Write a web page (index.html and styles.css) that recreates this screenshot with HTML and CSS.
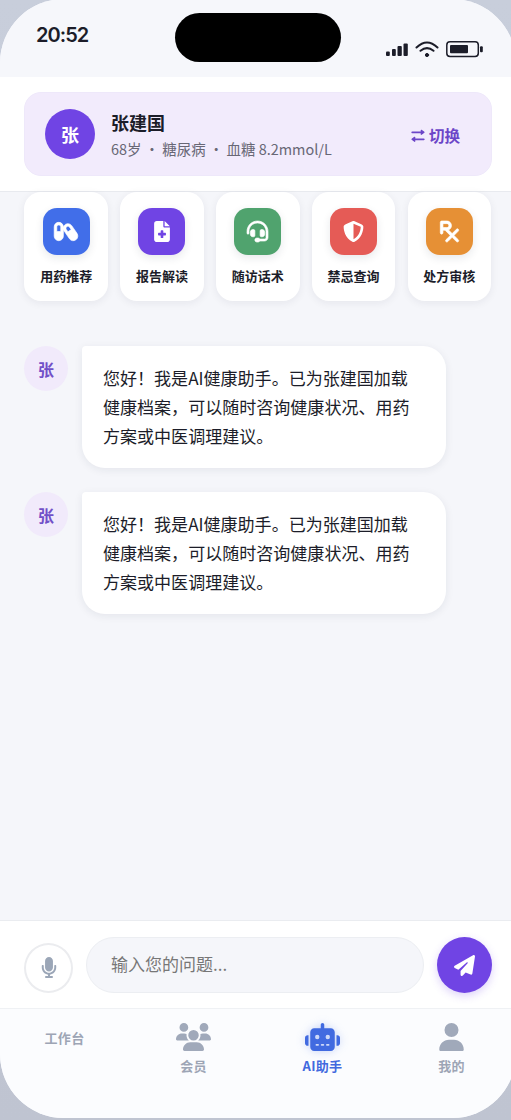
FILE: index.html
```html
<!DOCTYPE html>
<html lang="zh-CN">
<head>
<meta charset="utf-8">
<title>AI助手</title>
<link rel="stylesheet" href="styles.css">
</head>
<body>
<div class="phone">
  <header class="status">
    <span class="time">20:52</span>
    <span class="island"></span>
    <span class="status-icons">
      <svg width="22" height="15" viewBox="0 0 22 15" fill="#1c1d29"><rect x="0" y="9.500" width="3.800" height="4.500" rx="1"/><rect x="6" y="7" width="3.800" height="7" rx="1"/><rect x="11.500" y="4" width="4.300" height="10" rx="1"/><rect x="17.500" y="1.500" width="4.300" height="12.500" rx="1"/></svg>
      <svg width="24" height="17" viewBox="0 0 24 17" fill="none" stroke="#1c1d29" stroke-width="2" stroke-linecap="round"><path d="M1.500 6.500Q12-3.500 22.500 6.500M5.500 9.800Q12 4.500 18.500 9.800"/><circle cx="12" cy="14" r="1.600" fill="#1c1d29" stroke-width="1"/></svg>
      <svg width="38" height="17" viewBox="0 0 38 17" fill="#1c1d29"><rect x=".8" y=".8" width="31.500" height="14.600" rx="3.200" fill="none" stroke="#1c1d29" stroke-width="1.500"/><rect x="4" y="4" width="18" height="8.300" rx="1"/><rect x="34" y="5.200" width="2.800" height="6" rx="1"/></svg>
    </span>
  </header>

  <section class="patient-bar">
    <div class="patient">
      <div class="patient-avatar">张</div>
      <div class="patient-info">
        <div class="patient-name">张建国</div>
        <div class="patient-meta">68岁 ・ 糖尿病 ・ 血糖 8.2mmol/L</div>
      </div>
      <div class="switch">
        <svg width="14" height="14" viewBox="0 0 14 14" fill="#6c46c8" stroke="#6c46c8" stroke-width="1.700" stroke-linecap="round" stroke-linejoin="round"><path d="M1.200 4.300h9M12.800 11.300H4"/><path d="M10.300 2.300v4L13 4.300zM3.700 9.300v4L1 11.300z" stroke-width="1.200"/></svg>
        <span>切换</span>
      </div>
    </div>
  </section>

  <main class="content">
    <div class="tools">
      <div class="tool"><div class="tool-icon blue"><svg class="bold" width="24" height="21" viewBox="0 0 576 512"><path d="M64 144c0-26.500 21.500-48 48-48s48 21.500 48 48V256H64V144zM0 144V368c0 61.900 50.100 112 112 112s112-50.100 112-112V189.600c1.800 19.100 8.200 38 19.800 54.800L372.300 431.700c35.500 51.700 105.300 64.300 156 28.100s63-107.500 27.500-159.200L427.300 113.300C391.800 61.500 321.900 49 271.300 85.200c-28 20-44.300 50.800-47.300 83V144c0-61.900-50.100-112-112-112S0 82.100 0 144zm296.600 64.200c-16-23.300-10-55.300 11.900-71c21.200-15.100 50.500-10.300 66 12.200l40 58L335 264z"/></svg></div><span>用药推荐</span></div>
      <div class="tool"><div class="tool-icon purple"><svg width="16" height="21" viewBox="0 0 384 512"><path d="M64 0C28.700 0 0 28.700 0 64V448c0 35.300 28.700 64 64 64H320c35.300 0 64-28.700 64-64V160H256c-17.700 0-32-14.300-32-32V0H64zM256 0V128H384L256 0zM160 240c0-8.800 7.200-16 16-16h32c8.800 0 16 7.200 16 16v48h48c8.800 0 16 7.200 16 16v32c0 8.800-7.200 16-16 16H224v48c0 8.800-7.200 16-16 16H176c-8.800 0-16-7.200-16-16V352H112c-8.800 0-16-7.200-16-16V304c0-8.800 7.200-16 16-16h48V240z"/></svg></div><span>报告解读</span></div>
      <div class="tool"><div class="tool-icon green"><svg class="bold" width="21" height="21" viewBox="0 0 512 512"><path d="M256 48C141.100 48 48 141.100 48 256v40c0 13.300-10.700 24-24 24s-24-10.700-24-24V256C0 114.600 114.600 0 256 0S512 114.600 512 256V400.100c0 48.600-39.400 88-88.100 88L313.600 488c-8.300 14.300-23.800 24-41.600 24H240c-26.500 0-48-21.500-48-48s21.500-48 48-48h32c17.800 0 33.300 9.700 41.600 24l110.400 .1c22.100 0 40-17.900 40-40V256c0-114.900-93.100-208-208-208zM144 208h16c17.700 0 32 14.300 32 32V352c0 17.700-14.300 32-32 32H144c-35.300 0-64-28.700-64-64V272c0-35.300 28.700-64 64-64zm224 0c35.300 0 64 28.700 64 64v48c0 35.300-28.700 64-64 64H352c-17.700 0-32-14.300-32-32V240c0-17.700 14.300-32 32-32h16z"/></svg></div><span>随访话术</span></div>
      <div class="tool"><div class="tool-icon red"><svg width="21" height="21" viewBox="0 0 512 512"><path d="M256 0c4.600 0 9.200 1 13.400 2.900L457.700 82.800c22 9.300 38.400 31 38.300 57.200c-.5 99.200-41.300 280.700-213.600 363.200c-16.700 8-36.100 8-52.800 0C57.300 420.700 16.500 239.200 16 140c-.1-26.200 16.300-47.900 38.300-57.200L242.700 2.900C246.800 1 251.400 0 256 0zm0 66.800V444.800C394 378 431.100 230.100 432 141.400L256 66.800z"/></svg></div><span>禁忌查询</span></div>
      <div class="tool"><div class="tool-icon orange"><svg class="bold" width="19" height="21" viewBox="0 0 448 512"><path d="M32 0C14.300 0 0 14.300 0 32V288c0 17.700 14.300 32 32 32s32-14.300 32-32V224h50.700l128 128L137.400 457.400c-12.500 12.500-12.500 32.800 0 45.300s32.800 12.500 45.300 0L288 397.300 393.400 502.600c12.500 12.500 32.800 12.500 45.300 0s12.500-32.800 0-45.300L333.300 352 438.600 246.600c12.500-12.500 12.500-32.800 0-45.300s-32.800-12.500-45.300 0L288 306.700 199.500 218.200C241.800 202.300 272 160.700 272 112C272 50.100 221.900 0 160 0H32zM160 160H64V64h96c26.500 0 48 21.500 48 48s-21.500 48-48 48z"/></svg></div><span>处方审核</span></div>
    </div>

    <div class="messages">
      <div class="message"><div class="avatar">张</div><div class="bubble">您好！我是AI健康助手。已为张建国加载健康档案，可以随时咨询健康状况、用药方案或中医调理建议。</div></div>
      <div class="message"><div class="avatar">张</div><div class="bubble">您好！我是AI健康助手。已为张建国加载健康档案，可以随时咨询健康状况、用药方案或中医调理建议。</div></div>
    </div>
  </main>

  <section class="composer">
    <button class="mic" aria-label="语音"><svg width="16" height="21" viewBox="0 0 384 512"><path d="M192 0C139 0 96 43 96 96V256c0 53 43 96 96 96s96-43 96-96V96c0-53-43-96-96-96zM64 216c0-13.300-10.700-24-24-24s-24 10.700-24 24v40c0 89.100 66.200 162.700 152 174.400V464H120c-13.300 0-24 10.700-24 24s10.700 24 24 24h144c13.300 0 24-10.700 24-24s-10.700-24-24-24H216V430.400c85.800-11.700 152-85.300 152-174.400V216c0-13.300-10.700-24-24-24s-24 10.700-24 24v40c0 70.700-57.300 128-128 128s-128-57.300-128-128V216z"/></svg></button>
    <input class="question" type="text" placeholder="输入您的问题...">
    <button class="send" aria-label="发送"><svg width="21" height="21" viewBox="0 0 512 512"><path d="M498.100 5.600c10.100 7 15.400 19.100 13.500 31.200l-64 416c-1.500 9.700-7.400 18.200-16 23s-18.900 5.400-28 1.600L284 427.700l-68.500 74.100c-8.900 9.700-22.900 12.900-35.200 8.100S160 493.200 160 480V396.400c0-4 1.500-7.800 4.200-10.700L331.800 202.800c5.800-6.300 5.600-16-.4-22s-15.700-6.400-22-.7L106 360.800 17.700 316.600C7.100 311.300 .3 300.700 0 288.900s5.900-22.800 16.100-28.700l448-256c10.700-6.100 23.900-5.500 34 1.400z"/></svg></button>
  </section>

  <nav class="tabs">
    <div class="tab first"><span>工作台</span></div>
    <div class="tab"><svg width="35" height="28" viewBox="0 0 640 512"><path d="M144 0a80 80 0 1 1 0 160A80 80 0 1 1 144 0zM512 0a80 80 0 1 1 0 160A80 80 0 1 1 512 0zM0 298.700C0 239.800 47.800 192 106.700 192h42.700c15.900 0 31 3.500 44.600 9.700c-1.300 7.200-1.900 14.700-1.900 22.300c0 38.200 16.800 72.500 43.300 96H21.300C9.600 320 0 310.400 0 298.700zM405.300 320c26.600-23.500 42.600-57.800 42.600-96c0-7.600-.7-15-1.900-22.300c13.600-6.300 28.700-9.700 44.600-9.700h42.700C592.200 192 640 239.800 640 298.700c0 11.800-9.600 21.300-21.300 21.300H405.300zM224 224a96 96 0 1 1 192 0 96 96 0 1 1 -192 0zM128 485.300C128 411.700 187.700 352 261.300 352H378.700C452.300 352 512 411.700 512 485.300c0 14.700-11.900 26.700-26.700 26.700H154.700c-14.700 0-26.700-11.900-26.700-26.700z"/></svg><span>会员</span></div>
    <div class="tab active"><svg width="35" height="28" viewBox="0 0 640 512"><path d="M320 0c17.700 0 32 14.300 32 32V96H472c39.800 0 72 32.200 72 72V440c0 39.800-32.200 72-72 72H168c-39.800 0-72-32.200-72-72V168c0-39.800 32.200-72 72-72H288V32c0-17.700 14.300-32 32-32zM208 384c-8.800 0-16 7.200-16 16s7.200 16 16 16h32c8.800 0 16-7.200 16-16s-7.200-16-16-16H208zm96 0c-8.800 0-16 7.200-16 16s7.200 16 16 16h32c8.800 0 16-7.200 16-16s-7.200-16-16-16H304zm96 0c-8.800 0-16 7.200-16 16s7.200 16 16 16h32c8.800 0 16-7.200 16-16s-7.200-16-16-16H400zM264 256a40 40 0 1 0 -80 0 40 40 0 1 0 80 0zm152 40a40 40 0 1 0 0-80 40 40 0 1 0 0 80zM48 224H64V416H48c-26.500 0-48-21.500-48-48V272c0-26.500 21.500-48 48-48zm544 0c26.500 0 48 21.500 48 48v96c0 26.500-21.500 48-48 48H576V224h16z"/></svg><span>AI助手</span></div>
    <div class="tab"><svg width="25" height="28" viewBox="0 0 448 512"><path d="M224 256A128 128 0 1 0 224 0a128 128 0 1 0 0 256zm-45.700 48C79.800 304 0 383.800 0 482.300C0 498.700 13.300 512 29.700 512H418.300c16.400 0 29.700-13.300 29.700-29.700C448 383.800 368.200 304 269.700 304H178.300z"/></svg><span>我的</span></div>
  </nav>
</div>
</body>
</html>
```
FILE: styles.css
```css
* { box-sizing: border-box; }

body {
  margin: 0;
  height: 1120px;
  overflow: hidden;
  display: flow-root;
  background: linear-gradient(180deg, #c8cedb, #bfc4d1);
  font-family: "Noto Sans CJK SC", sans-serif;
  color: #1c1d29;
}

.phone {
  width: 516px;
  height: 1119px;
  margin-top: -1px;
  border-radius: 64px;
  overflow: hidden;
  display: flex;
  flex-direction: column;
  background: #f5f6fa;
}

.status {
  flex: none;
  height: 78px;
  padding: 14px 32px 0 36px;
  display: grid;
  grid-template-columns: 139px 166px 1fr;
  align-items: start;
  background: #f6f7fb;
}
.time {
  margin-top: 10px;
  font: 600 20px/24px Inter, sans-serif;
  letter-spacing: -0.95px;
}
.island { height: 49px; border-radius: 25px; background: #000; }
.status-icons {
  display: flex;
  justify-content: flex-end;
  align-items: center;
  gap: 7px;
  height: 17px;
  margin-top: 28px;
}

.patient-bar {
  flex: none;
  height: 115px;
  padding: 15px 24px;
  background: #fff;
  border-bottom: 1px solid #e8eaef;
}
.patient {
  height: 84px;
  padding: 0 31px 0 20px;
  display: flex;
  align-items: center;
  border: 1px solid #eee8fa;
  border-radius: 17px;
  background: #f2ebfc;
}
.patient-avatar {
  width: 50px;
  height: 50px;
  border-radius: 50%;
  background: #7044e4;
  color: #fff;
  font-size: 18px;
  font-weight: 700;
  line-height: 51px;
  text-align: center;
}
.patient-info { flex: 1; margin-left: 16px; padding-top: 2px; }
.patient-name { font-size: 18px; font-weight: 700; line-height: 27px; }
.patient-meta { font-size: 14.45px; line-height: 25px; color: #686775; }
.switch {
  display: flex;
  align-items: center;
  gap: 4px;
  padding-top: 1px;
  color: #6c46c8;
  font-size: 15.5px;
  font-weight: 700;
}

.content { flex: 1; min-height: 0; padding: 0 24px; }
.tools {
  display: grid;
  grid-template-columns: repeat(5, 83.6px);
  gap: 12.2px;
  padding-left: 0.4px;
}
.tool {
  height: 109px;
  padding-top: 16px;
  display: flex;
  flex-direction: column;
  align-items: center;
  gap: 10px;
  border-radius: 17px;
  background: #fff;
  box-shadow: 0 2px 9px rgba(25, 35, 60, 0.07);
  font-size: 13px;
  font-weight: 700;
  line-height: 22px;
}
.tool-icon {
  width: 47px;
  height: 47px;
  border-radius: 14px;
  display: grid;
  place-items: center;
  box-shadow: 0 3px 8px rgba(25, 35, 60, 0.1);
}
.tool-icon svg, .send svg { fill: #fff; }
.tool-icon .bold { stroke: #fff; stroke-width: 16; overflow: visible; }
.blue { background: #416ee9; }
.purple { background: #7044e4; }
.green { background: #50a36e; }
.red { background: #e55b56; }
.orange { background: #e69035; }

.messages { margin-top: 45px; display: flex; flex-direction: column; gap: 24px; }
.message { display: flex; gap: 14px; }
.avatar {
  width: 44px;
  height: 45px;
  border-radius: 50%;
  background: #f1eafb;
  color: #7150c8;
  font-size: 16px;
  font-weight: 700;
  line-height: 47px;
  text-align: center;
}
.bubble {
  width: 364px;
  height: 122px;
  padding: 17px 26px 17px 21px;
  border-radius: 4px 23px 23px 23px;
  background: #fff;
  box-shadow: 0 2px 8px rgba(25, 35, 60, 0.08);
  font-size: 17.05px;
  line-height: 29px;
}

.composer {
  flex: none;
  height: 88px;
  padding: 16px 24px 15px;
  display: flex;
  align-items: flex-end;
  border-top: 1px solid #eaecf0;
  background: #fff;
}
.mic, .send {
  flex: none;
  padding: 0;
  border: 0;
  border-radius: 50%;
  display: grid;
  place-items: center;
}
.mic { width: 49px; height: 50px; padding-bottom: 1px; border: 2px solid #ebecef; background: #fff; }
.mic svg { fill: #9ba6b7; }
.question {
  width: 338px;
  height: 56px;
  margin: 0 13px;
  padding: 0 24px 3px;
  border: 1px solid #eceef2;
  border-radius: 28px;
  background: #f5f6fa;
  font: 17px "Noto Sans CJK SC", sans-serif;
}
.question::placeholder { color: #777; }
.send { width: 55px; height: 56px; background: #7044e4; box-shadow: 0 3px 8px rgba(112, 68, 228, 0.24); }

.tabs {
  flex: none;
  height: 110px;
  padding-top: 14px;
  display: grid;
  grid-template-columns: repeat(4, 1fr);
  border-top: 1px solid #eff1f4;
  background: #fbfcfe;
}
.tab {
  display: flex;
  flex-direction: column;
  align-items: center;
  gap: 5px;
  color: #9da5b5;
  fill: #a0a9ba;
  font-size: 13px;
  font-weight: 700;
  line-height: 20px;
  letter-spacing: 0.3px;
}
.tab.first { padding-top: 5px; }
.tab.active { color: #4169de; fill: #416ae0; }
.tab.active svg { filter: drop-shadow(0 0 4px rgba(65, 110, 233, 0.3)); }
```
